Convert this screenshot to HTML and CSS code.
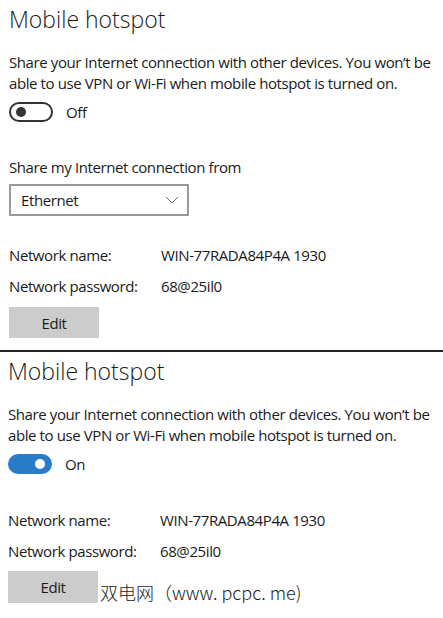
FILE: index.html
```html
<!DOCTYPE html>
<html lang="en">

<head>
    <meta charset="UTF-8">
    <meta name="viewport" content="width=device-width, initial-scale=1.0">
    <title>Mobile hotspot</title>
    <link rel="stylesheet" href="styles.css">
</head>

<body>
    <section class="hotspot">
        <h1 class="title">Mobile hotspot</h1>
        <p class="desc">Share your Internet connection with other devices. You won’t be<br>able to use VPN or Wi-Fi when mobile hotspot is turned on.</p>
        <div class="toggle_row">
            <span class="toggle"><span class="knob"></span></span>
            <span class="state">Off</span>
        </div>
        <div class="from_label">Share my Internet connection from</div>
        <div class="select">
            <span>Ethernet</span>
            <svg class="chevron" width="14" height="8" viewBox="0 0 14 8">
                <path d="M1 1 L7 7 L13 1" fill="none" stroke="#666" stroke-width="1" />
            </svg>
        </div>
        <div class="info">
            <span>Network name:</span><span>WIN-77RADA84P4A 1930</span>
            <span>Network password:</span><span>68@25il0</span>
        </div>
        <div class="edit_row">
            <button class="edit">Edit</button>
        </div>
    </section>

    <div class="divider"></div>

    <section class="hotspot second">
        <h1 class="title">Mobile hotspot</h1>
        <p class="desc">Share your Internet connection with other devices. You won’t be<br>able to use VPN or Wi-Fi when mobile hotspot is turned on.</p>
        <div class="toggle_row">
            <span class="toggle on"><span class="knob"></span></span>
            <span class="state">On</span>
        </div>
        <div class="info spaced">
            <span>Network name:</span><span>WIN-77RADA84P4A 1930</span>
            <span>Network password:</span><span>68@25il0</span>
        </div>
        <div class="edit_row">
            <button class="edit">Edit</button>
            <span class="mark">双电网（www. pcpc. me)</span>
        </div>
    </section>
</body>

</html>
```

FILE: styles.css
```css
body {
    margin: 0;
    background: #fff;
    color: #1a1a1a;
    font-family: "Open Sans", "Noto Sans", sans-serif;
    font-size: 15px;
    letter-spacing: -0.4px;
}

.hotspot {
    padding: 0 0 0 9px;
}

.hotspot.second {
    padding-left: 8px;
}

.title {
    margin: 0;
    padding-top: 4px;
    font-size: 23px;
    font-weight: 300;
    line-height: 30px;
    letter-spacing: 0;
}

.desc {
    margin: 18px 0 0;
    line-height: 21px;
}

.toggle_row {
    display: flex;
    align-items: center;
    gap: 13px;
    margin-top: 8px;
    height: 20px;
}

.toggle {
    box-sizing: border-box;
    display: flex;
    align-items: center;
    width: 44px;
    height: 20px;
    padding: 0 5px;
    border: 2px solid #333;
    border-radius: 10px;
}

.knob {
    width: 10px;
    height: 10px;
    border-radius: 50%;
    background: #333;
}

.toggle.on {
    justify-content: flex-end;
    border-color: #2b7cc8;
    background: #2b7cc8;
}

.toggle.on .knob {
    background: #fff;
}

.from_label {
    margin-top: 35px;
    line-height: 21px;
}

.select {
    box-sizing: border-box;
    display: flex;
    align-items: center;
    justify-content: space-between;
    width: 180px;
    height: 32px;
    margin-top: 6px;
    padding: 0 8px 0 10px;
    border: 2px solid #999;
}

.info {
    display: grid;
    grid-template-columns: 152px auto;
    row-gap: 10px;
    margin-top: 29px;
    line-height: 21px;
}

.info.spaced {
    margin-top: 36px;
}

.edit_row {
    display: flex;
    align-items: flex-end;
    margin-top: 10px;
}

.second .edit_row {
    margin-top: 9px;
}

.edit {
    width: 90px;
    height: 31px;
    border: 0;
    background: #ccc;
    color: #1a1a1a;
    font-family: inherit;
    font-size: 15px;
    letter-spacing: inherit;
}

.second .edit {
    height: 32px;
}

.mark {
    margin-left: 2px;
    margin-bottom: -2px;
    color: #222;
    font-family: "Noto Sans CJK SC", sans-serif;
    font-size: 18px;
    font-weight: 300;
    letter-spacing: 0;
}

.divider {
    height: 2px;
    margin-top: 12px;
    background: #222;
}
```
